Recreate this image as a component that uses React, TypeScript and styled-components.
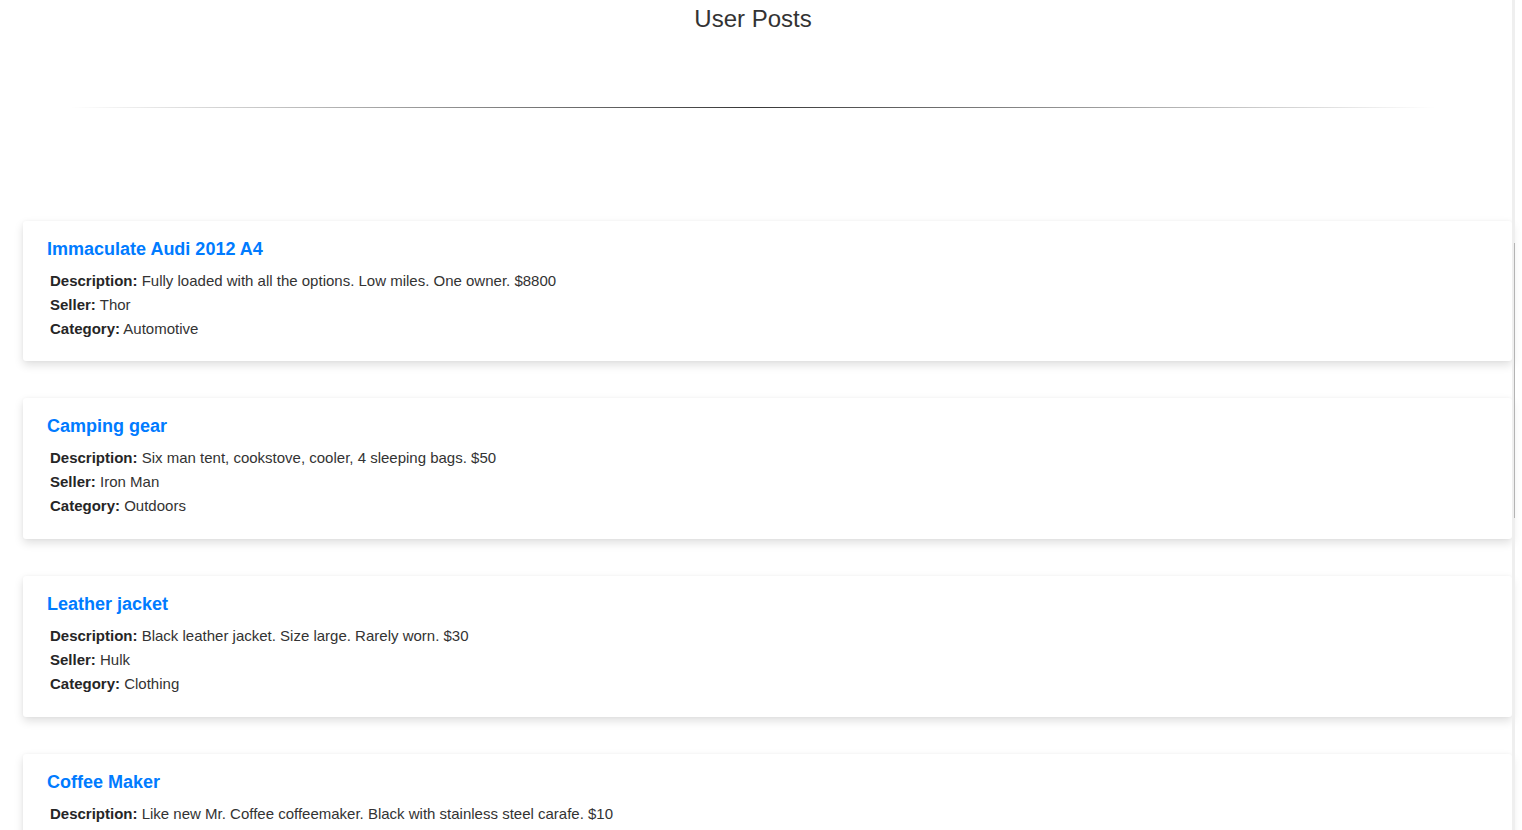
import React from "react";
import styled, { createGlobalStyle } from "styled-components";

const GlobalStyle = createGlobalStyle`
  html, body {
    margin: 0;
    padding: 0;
    background: #ffffff;
    overflow: hidden;
  }
  body {
    font-family: "Liberation Sans", Arial, Helvetica, sans-serif;
    color: #212529;
  }
`;

const Page = styled.div`
  width: 1512px;
  display: flex;
  flex-direction: column;
`;

const Header = styled.header`
  width: 1506px;
  display: flex;
  flex-direction: column;
  align-items: center;
  padding-top: 5px;
`;

const Title = styled.h3`
  margin: 0;
  font-size: 24px;
  line-height: 28.8px;
  font-weight: 400;
  color: #333;
`;

const Divider = styled.hr`
  align-self: stretch;
  margin: 73px 70px 0;
  border: 0;
  height: 1px;
  background-image: linear-gradient(
    to right,
    rgba(0, 0, 0, 0),
    rgba(0, 0, 0, 0.78),
    rgba(0, 0, 0, 0)
  );
`;

const PostList = styled.main`
  display: flex;
  flex-direction: column;
  gap: 37.2px;
  margin-top: 113px;
  padding-left: 23px;
`;

const Card = styled.article`
  background: #fff;
  border-radius: 3px;
  padding: 17px 24px 20.5px;
  box-shadow: 0 4px 10px rgba(0, 0, 0, 0.13), 0 0 3px rgba(0, 0, 0, 0.04);
`;

const PostTitle = styled.h4`
  margin: 0 0 9px;
  font-size: 18px;
  line-height: 22px;
  font-weight: 700;
  color: #007bff;
`;

const Details = styled.div`
  padding-left: 3px;
  display: flex;
  flex-direction: column;
`;

const Line = styled.p`
  margin: 0;
  font-size: 15px;
  line-height: 24px;
  color: #333;
`;

const Label = styled.strong`
  font-weight: 700;
  color: #262626;
`;

const ScrollTrack = styled.div`
  position: fixed;
  top: 0;
  left: 1512px;
  width: 3px;
  height: 100vh;
  background: #efefef;
`;

const ScrollThumb = styled.div`
  position: absolute;
  top: 243px;
  left: 2px;
  width: 1px;
  height: 275px;
  background: #b4b4b4;
`;

type Post = {
  title: string;
  description: string;
  seller: string;
  category: string;
};

const posts: Post[] = [
  {
    title: "Immaculate Audi 2012 A4",
    description: "Fully loaded with all the options. Low miles. One owner. $8800",
    seller: "Thor",
    category: "Automotive",
  },
  {
    title: "Camping gear",
    description: "Six man tent, cookstove, cooler, 4 sleeping bags. $50",
    seller: "Iron Man",
    category: "Outdoors",
  },
  {
    title: "Leather jacket",
    description: "Black leather jacket. Size large. Rarely worn. $30",
    seller: "Hulk",
    category: "Clothing",
  },
  {
    title: "Coffee Maker",
    description: "Like new Mr. Coffee coffeemaker. Black with stainless steel carafe. $10",
    seller: "Black Widow",
    category: "Household",
  },
];

export default function App() {
  return (
    <>
      <GlobalStyle />
      <Page>
        <Header>
          <Title>User Posts</Title>
          <Divider />
        </Header>
        <PostList>
          {posts.map((p) => (
            <Card key={p.title}>
              <PostTitle>{p.title}</PostTitle>
              <Details>
                <Line>
                  <Label>Description:</Label> {p.description}
                </Line>
                <Line>
                  <Label>Seller:</Label> {p.seller}
                </Line>
                <Line>
                  <Label>Category:</Label> {p.category}
                </Line>
              </Details>
            </Card>
          ))}
        </PostList>
      </Page>
      <ScrollTrack>
        <ScrollThumb />
      </ScrollTrack>
    </>
  );
}
